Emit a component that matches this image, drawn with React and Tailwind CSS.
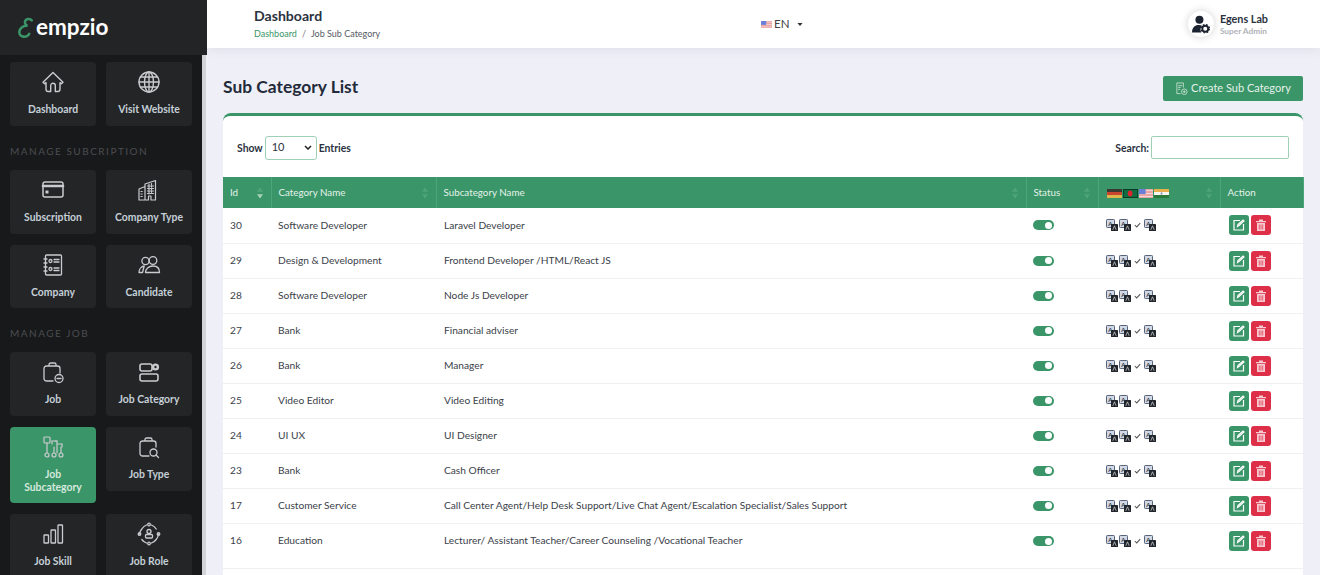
import React from "react";

const S = ({ children, size = 24, vb = "0 0 24 24", w = 1.4 }) => (
  <svg width={size} height={size} viewBox={vb} fill="none" stroke="currentColor" strokeWidth={w} strokeLinecap="round" strokeLinejoin="round">{children}</svg>
);

const icons = {
  home: <S><path d="M12 2.500 2 12.200l1.600 1.600L5 12.600v6.600c0 1.300 1 2.300 2.300 2.300h2.400v-6a2.300 2.300 0 0 1 4.600 0v6h2.400c1.300 0 2.300-1 2.300-2.300v-6.600l1.400 1.200 1.600-1.600z" /></S>,
  globe: <S><circle cx="12" cy="12" r="10" /><ellipse cx="12" cy="12" rx="4.500" ry="10" /><path d="M12 2v20M2 12h20M3.400 7h17.200M3.400 17h17.200" /></S>,
  card: <S w={1.5}><rect x="2" y="4" width="20" height="15" rx="2" /><path d="M2 8h20" strokeWidth="2.600" /><rect x="4.500" y="12.500" width="3" height="3" fill="currentColor" stroke="none" /></S>,
  building: <S w={1.2}><path d="M2 22V11l6-2.500V6l10.500-3.500V22H14v-4h-2.500v4zM2 22h3.500M8 8.500V22" /><path d="M4 13.500h2M4 16h2M4 18.500h2M10.500 8h6M10.500 10.500h6M10.500 13h6M10.500 15.500h6M12 6v10M14.500 5.500v10" strokeDasharray="1.200 1.200" /></S>,
  notebook: <S w={1.3}><rect x="4.500" y="2" width="16" height="20" rx="1" /><path d="M3 6h3M3 10h3M3 14h3M3 18h3M13 6.500h5M13 9h5M13 15h5M13 17.500h5" /><circle cx="9.500" cy="8" r="1.500" /><circle cx="9.500" cy="16" r="1.500" /></S>,
  people: <S w={1.3}><circle cx="8.500" cy="8" r="3.600" /><circle cx="16" cy="7.500" r="3.800" /><path d="M2 19.500c0-3 2-6 5.200-6.500L5.500 19.500zM8.500 19.500c0-3.500 3-6.500 7.500-6.500s6.500 3 6.500 6.500z" /></S>,
  bag: <S w={1.3}><path d="M8 6V4.500A1.500 1.500 0 0 1 9.500 3h4A1.500 1.500 0 0 1 15 4.500V6M12 21H5.500A2.500 2.500 0 0 1 3 18.500v-10A2.500 2.500 0 0 1 5.500 6h11A2.500 2.500 0 0 1 19 8.500V13" /><circle cx="18" cy="18.500" r="4" /><path d="M16 18.500h4" /></S>,
  cat: <S w={1.6}><rect x="3" y="4" width="12" height="7" rx="2" /><rect x="3" y="14" width="18" height="7" rx="2" /><circle cx="18.500" cy="7" r="3.600" fill="currentColor" stroke="none" /><circle cx="18.500" cy="7" r="1.200" fill="#242527" stroke="none" /></S>,
  tree: <S w={1.2}><rect x="3" y="2" width="6" height="6" rx="1" /><path d="M6 8v10M11 6h5v12M21 9h-5" /><path d="M16 6h-2M21 9v3" /><circle cx="6" cy="20" r="2" /><circle cx="13" cy="20" r="2" /><circle cx="20" cy="20" r="2" /><path d="M11 6v3M13 12v6M20 12v6" /></S>,
  bagSearch: <S w={1.3}><path d="M8 6V4.500A1.500 1.500 0 0 1 9.500 3h4A1.500 1.500 0 0 1 15 4.500V6M12 21H5.500A2.500 2.500 0 0 1 3 18.500v-10A2.500 2.500 0 0 1 5.500 6h11A2.500 2.500 0 0 1 19 8.500V12" /><circle cx="16.500" cy="17.500" r="3.500" /><path d="m19 20 2.500 2.500" /></S>,
  bars: <S w={1.3}><rect x="3" y="13" width="4.500" height="8" rx=".6" /><rect x="10" y="8" width="4.500" height="13" rx=".6" /><rect x="17" y="3" width="4.500" height="18" rx=".6" /></S>,
  role: <S w={1.3}><path d="M4.800 7A9.500 9.500 0 0 1 9.500 3M14.500 3A9.500 9.500 0 0 1 19.200 7M21.500 12a9.500 9.500 0 0 1-2.300 5.500M14.500 21a9.500 9.500 0 0 0 4.700-3.500M9.500 21a9.500 9.500 0 0 1-4.700-3.500M2.500 12a9.500 9.500 0 0 1 2.300-5" /><circle cx="12" cy="2.500" r="1.300" /><circle cx="12" cy="21.500" r="1.300" /><circle cx="21.500" cy="12" r="1.300" /><circle cx="2.500" cy="12" r="1.300" /><circle cx="12" cy="9.500" r="2" /><rect x="8.500" y="12.500" width="7" height="3.500" rx="1" /></S>,
};

const Tile = ({ icon, label, active }) => (
  <div className={`flex flex-col items-center rounded-[4px] px-1 pt-[8px] ${active ? "bg-[#3a9568] h-[76px]" : "bg-[#242527] h-[63.750px]"}`}>
    <div className="h-[24px] w-[24px] text-[#c9cbce] leading-none">{icons[icon]}</div>
    <div className={`mt-[9px] text-center text-[10.400px] font-bold leading-[12.500px] ${active ? "text-[#d5e9de]" : "text-[#c5d0d8]"}`}>{label}</div>
  </div>
);

const Section = ({ children }) => (
  <div className="mb-[13px] mt-[19px] h-[12px] text-[10px] leading-[12px] tracking-[1.500px] text-[#4b4d50]">{children}</div>
);

const Grid = ({ children }) => (
  <div className="grid grid-cols-[86px_86px] items-start gap-x-[10px] gap-y-[11px]">{children}</div>
);

const Translate = () => (
  <svg width="12" height="12" viewBox="0 0 12 12">
    <rect x=".5" y=".5" width="8" height="8" rx=".8" fill="#d3d9e4" stroke="#56637a" strokeWidth="1" />
    <text x="4.300" y="6.600" fontSize="6" fontFamily="Lato" fontWeight="700" fill="#2f3846" textAnchor="middle">A</text>
    <rect x="5" y="5" width="7" height="7" rx=".6" fill="#20242b" />
    <path d="M6.800 10.800 8.500 6.800l1.700 4" fill="none" stroke="#c9c9c9" strokeWidth=".8" />
  </svg>
);

const Flag = ({ kind, w = 19, h = 9 }) => (
  <svg width={w} height={h} viewBox="0 0 19 9" className="block" preserveAspectRatio="none">
    {kind === "de" && <><rect width="19" height="3" fill="#3a3a32" /><rect y="3" width="19" height="3" fill="#c9452f" /><rect y="6" width="19" height="3" fill="#dfb64c" /></>}
    {kind === "bd" && <><rect width="19" height="9" fill="#0f6b42" stroke="#08291b" strokeWidth="1.400" /><circle cx="9" cy="4.500" r="3" fill="#d9262e" /></>}
    {kind === "us" && <><rect width="19" height="9" fill="#e9a5a5" /><path d="M0 1.500h19M0 4.500h19M0 7.500h19" stroke="#f3dede" strokeWidth="1" /><rect width="9" height="5" fill="#6a7fd8" /></>}
    {kind === "in" && <><rect width="19" height="3" fill="#e8b04c" /><rect y="3" width="19" height="3" fill="#f6f6f0" /><rect y="6" width="19" height="3" fill="#2a7a3c" /><circle cx="9.500" cy="4.500" r="1.200" fill="#8a93b8" /></>}
  </svg>
);

const Sort = ({ active }) => (
  <svg width="6" height="12" viewBox="0 0 7 13" className="absolute right-[8px] top-[10px]">
    <path d="M3.500 0 7 5H0z" fill="#4fa57a" />
    <path d="M3.500 13 7 8H0z" fill={active ? "#a8d3bb" : "#4fa57a"} />
  </svg>
);

const rows = [
  [30, "Software Developer", "Laravel Developer"],
  [29, "Design & Development", "Frontend Developer /HTML/React JS"],
  [28, "Software Developer", "Node Js Developer"],
  [27, "Bank", "Financial adviser"],
  [26, "Bank", "Manager"],
  [25, "Video Editor", "Video Editing"],
  [24, "UI UX", "UI Designer"],
  [23, "Bank", "Cash Officer"],
  [17, "Customer Service", "Call Center Agent/Help Desk Support/Live Chat Agent/Escalation Specialist/Sales Support"],
  [16, "Education", "Lecturer/ Assistant Teacher/Career Counseling /Vocational Teacher"],
];

const Th = ({ children, w, active, sort = true }) => (
  <th className={`relative h-[31px] border-r border-[#4fa57a] pl-[7px] text-left text-[9.800px] font-normal text-[#e4f2ea] ${w}`}>
    {children}
    {sort && <Sort active={active} />}
  </th>
);

export default function App() {
  return (
    <div className="flex h-[575px] w-[1320px] overflow-hidden bg-[#eff0f7] font-['Lato',sans-serif] text-[#2a3038]">
      <aside className="z-10 flex w-[207px] shrink-0 flex-col">
        <div className="flex h-[55px] shrink-0 items-center bg-[#232426] pl-[18px]">
          <svg width="15" height="23" viewBox="0 0 18 24" fill="none" stroke="#3a9568" strokeWidth="3" strokeLinecap="round">
            <path d="M16.500 3.500C15 1 9.500 1 8.500 4.500 7.800 7 9.500 9.500 11.500 10 6 9.500 1.500 13 1.500 17.500c0 4 3.500 5.500 6 5.500 3 0 5-1.500 6-3.500" />
          </svg>
          <span className="ml-[3px] text-[22.500px] font-bold leading-none text-white">empzio</span>
        </div>
        <div className="flex min-h-0 flex-1 overflow-hidden">
          <div className="w-[202px] bg-[#18191b] pl-[10px] pt-[7px]">
            <Grid>
              <Tile icon="home" label="Dashboard" />
              <Tile icon="globe" label="Visit Website" />
            </Grid>
            <Section>MANAGE SUBCRIPTION</Section>
            <Grid>
              <Tile icon="card" label="Subscription" />
              <Tile icon="building" label="Company Type" />
              <Tile icon="notebook" label="Company" />
              <Tile icon="people" label="Candidate" />
            </Grid>
            <Section>MANAGE JOB</Section>
            <Grid>
              <Tile icon="bag" label="Job" />
              <Tile icon="cat" label="Job Category" />
              <Tile icon="tree" label={<>Job<br />Subcategory</>} active />
              <Tile icon="bagSearch" label="Job Type" />
              <Tile icon="bars" label="Job Skill" />
              <Tile icon="role" label="Job Role" />
            </Grid>
          </div>
          <div className="w-[4px] bg-[#d2d3d6]" />
          <div className="w-[1px] bg-[#eff0f7]" />
        </div>
      </aside>

      <main className="min-w-0 flex-1">
        <header className="relative flex h-[48px] items-center bg-white pl-[47px] pr-[52px] shadow-[0_2px_10px_rgba(40,40,70,0.08)]">
          <div className="w-[507px]">
            <div className="-mt-[1px] text-[14.100px] font-bold leading-[18px] text-[#2b3240]">Dashboard</div>
            <div className="mt-[3px] text-[9px] leading-[12px] text-[#555b63]">
              <span className="text-[#3a9568]">Dashboard</span>
              <span className="mx-[5px] text-[#777]">/</span>
              Job Sub Category
            </div>
          </div>
          <div className="flex items-center text-[11.500px] text-[#444]">
            <Flag kind="us" w={11} h={7} />
            <span className="ml-[2px]">EN</span>
            <svg width="6" height="3" viewBox="0 0 7 4" className="ml-[8px]"><path d="M0 0h7L3.500 4z" fill="#333" /></svg>
          </div>
          <div className="ml-auto flex items-center">
            <div className="flex h-[26px] w-[26px] items-center justify-center rounded-full bg-white shadow-[0_0_8px_rgba(0,0,0,0.18)]">
              <svg width="19" height="19" viewBox="0 0 18 18" fill="#1b2230">
                <circle cx="8" cy="4.500" r="3.800" />
                <path d="M1 16.500c0-4.500 2.500-7 6.500-7 1 0 2 .2 3 .6-1.700 1.600-2 4.400-.7 6.400z" />
                <circle cx="13.500" cy="13" r="2.800" fill="none" stroke="#1b2230" strokeWidth="1.800" />
                <circle cx="13.500" cy="13" r="4" fill="none" stroke="#1b2230" strokeWidth="1.200" strokeDasharray="1.500 1.700" />
              </svg>
            </div>
            <div className="ml-[6px]">
              <div className="text-[10.800px] font-bold leading-[12px] text-[#2b3240]">Egens Lab</div>
              <div className="mt-[1px] text-[8.300px] font-bold leading-[10px] text-[#b0b3b8]">Super Admin</div>
            </div>
          </div>
        </header>

        <div className="pl-[16px] pr-[17px]">
          <div className="flex h-[65px] items-center justify-between pt-[13px]">
            <h1 className="text-[17.400px] font-bold leading-[22px] text-[#232b3a]">Sub Category List</h1>
            <button className="mt-[2px] flex h-[25px] w-[140px] items-center justify-center rounded-[2px] bg-[#3a9568] text-[11px] text-[#e4f2ea]">
              <svg width="13" height="13" viewBox="0 0 14 14" fill="none" stroke="#cfe6d9" strokeWidth=".9" className="mr-[3px]">
                <path d="M6 12.500H2V1h7v5M3.500 4h4M3.500 6h2.500M3.500 8h2" />
                <circle cx="10" cy="10.500" r="3" />
                <path d="M10 9v3M8.500 10.500h3" />
              </svg>
              Create Sub Category
            </button>
          </div>

          <section className="min-h-[470px] rounded-t-[8px] border-t-[3px] border-[#3a9568] bg-white">
            <div className="flex h-[61px] items-center justify-between px-[14px] pt-[2px] text-[10.400px] font-bold text-[#2b3240]">
              <div className="flex items-center">
                <span className="mt-[2px]">Show</span>
                <div className="mx-[2px] flex h-[24px] w-[52px] items-center justify-between rounded-[3px] border border-[#9fd0b6] pl-[6px] pr-[4px] text-[11px] font-normal">
                  10
                  <svg width="8" height="5" viewBox="0 0 8 5" fill="none" stroke="#222" strokeWidth="1.500"><path d="m1 1 3 3 3-3" /></svg>
                </div>
                <span className="mt-[2px]">Entries</span>
              </div>
              <div className="flex items-center">
                <span className="mt-[2px]">Search:</span>
                <div className="ml-[2px] h-[23px] w-[138px] rounded-[2px] border border-[#9fd0b6]" />
              </div>
            </div>

            <table className="w-full table-fixed border-collapse">
              <thead className="bg-[#3a9568]">
                <tr>
                  <Th w="w-[48px]" active>Id</Th>
                  <Th w="w-[165px]">Category Name</Th>
                  <Th w="w-[590px]">Subcategory Name</Th>
                  <Th w="w-[72px]">Status</Th>
                  <Th w="w-[122px]">
                    <div className="flex gap-[1px] pl-[1px] pt-[1px]">
                      <Flag kind="de" w={15} h={9} />
                      <Flag kind="bd" w={15} h={9} />
                      <Flag kind="us" w={14} h={9} />
                      <Flag kind="in" w={15} h={9} />
                    </div>
                  </Th>
                  <Th w="w-[83px]" sort={false}>Action</Th>
                </tr>
              </thead>
              <tbody>
                {rows.map(([id, cat, sub], i) => {
                  const last = i === rows.length - 1;
                  const textPad = last ? "pb-[9px]" : "pt-[1px]";
                  const ctrlPad = last ? "pb-[9px]" : "";
                  return (
                    <tr key={id} className={`${last ? "h-[45px]" : "h-[35px]"} border-b border-[#eef0f2] text-[10.200px] text-[#3b4149]`}>
                      <td className={`pl-[7px] ${textPad}`}>{id}</td>
                      <td className={`pl-[7px] ${textPad}`}>{cat}</td>
                      <td className={`pl-[8px] ${textPad}`}>{sub}</td>
                      <td className={`pl-[7px] ${ctrlPad}`}>
                        <div className="flex h-[10px] w-[21px] items-center justify-end rounded-full bg-[#3a9568] pr-[2px]">
                          <div className="h-[7px] w-[7px] rounded-full bg-white" />
                        </div>
                      </td>
                      <td className={`pl-[8px] ${ctrlPad}`}>
                        <div className="flex items-center gap-[1px] text-[#444]">
                          <Translate />
                          <Translate />
                          <svg width="7" height="6" viewBox="0 0 9 7" fill="none" stroke="#555" strokeWidth="1.300" className="mx-[2px]"><path d="m1 3.500 2.500 2.500L8 1" /></svg>
                          <Translate />
                        </div>
                      </td>
                      <td className={`pl-[9px] ${ctrlPad}`}>
                        <div className="flex gap-[2px]">
                          <div className="flex h-[20px] w-[20px] items-center justify-center rounded-[3px] bg-[#3a9568]">
                            <svg width="12" height="12" viewBox="0 0 12 12" fill="none" stroke="#fff" strokeWidth="1.200"><path d="M7 1.500H1v9.500h9.500V5M4.500 7.500l.4-2L10 1l1 1-5 4.500z" /></svg>
                          </div>
                          <div className="flex h-[20px] w-[20px] items-center justify-center rounded-[3px] bg-[#dd3048]">
                            <svg width="10" height="12" viewBox="0 0 10 12" fill="#f7c9d0"><path d="M0 2h10v1.200H0zM3 .5h4V2H3zM1 4h8v8H1z" /><path d="M3.300 5.500v5M5 5.500v5M6.700 5.500v5" stroke="#dd3048" strokeWidth=".7" /></svg>
                          </div>
                        </div>
                      </td>
                    </tr>
                  );
                })}
              </tbody>
            </table>
          </section>
        </div>
      </main>
    </div>
  );
}
